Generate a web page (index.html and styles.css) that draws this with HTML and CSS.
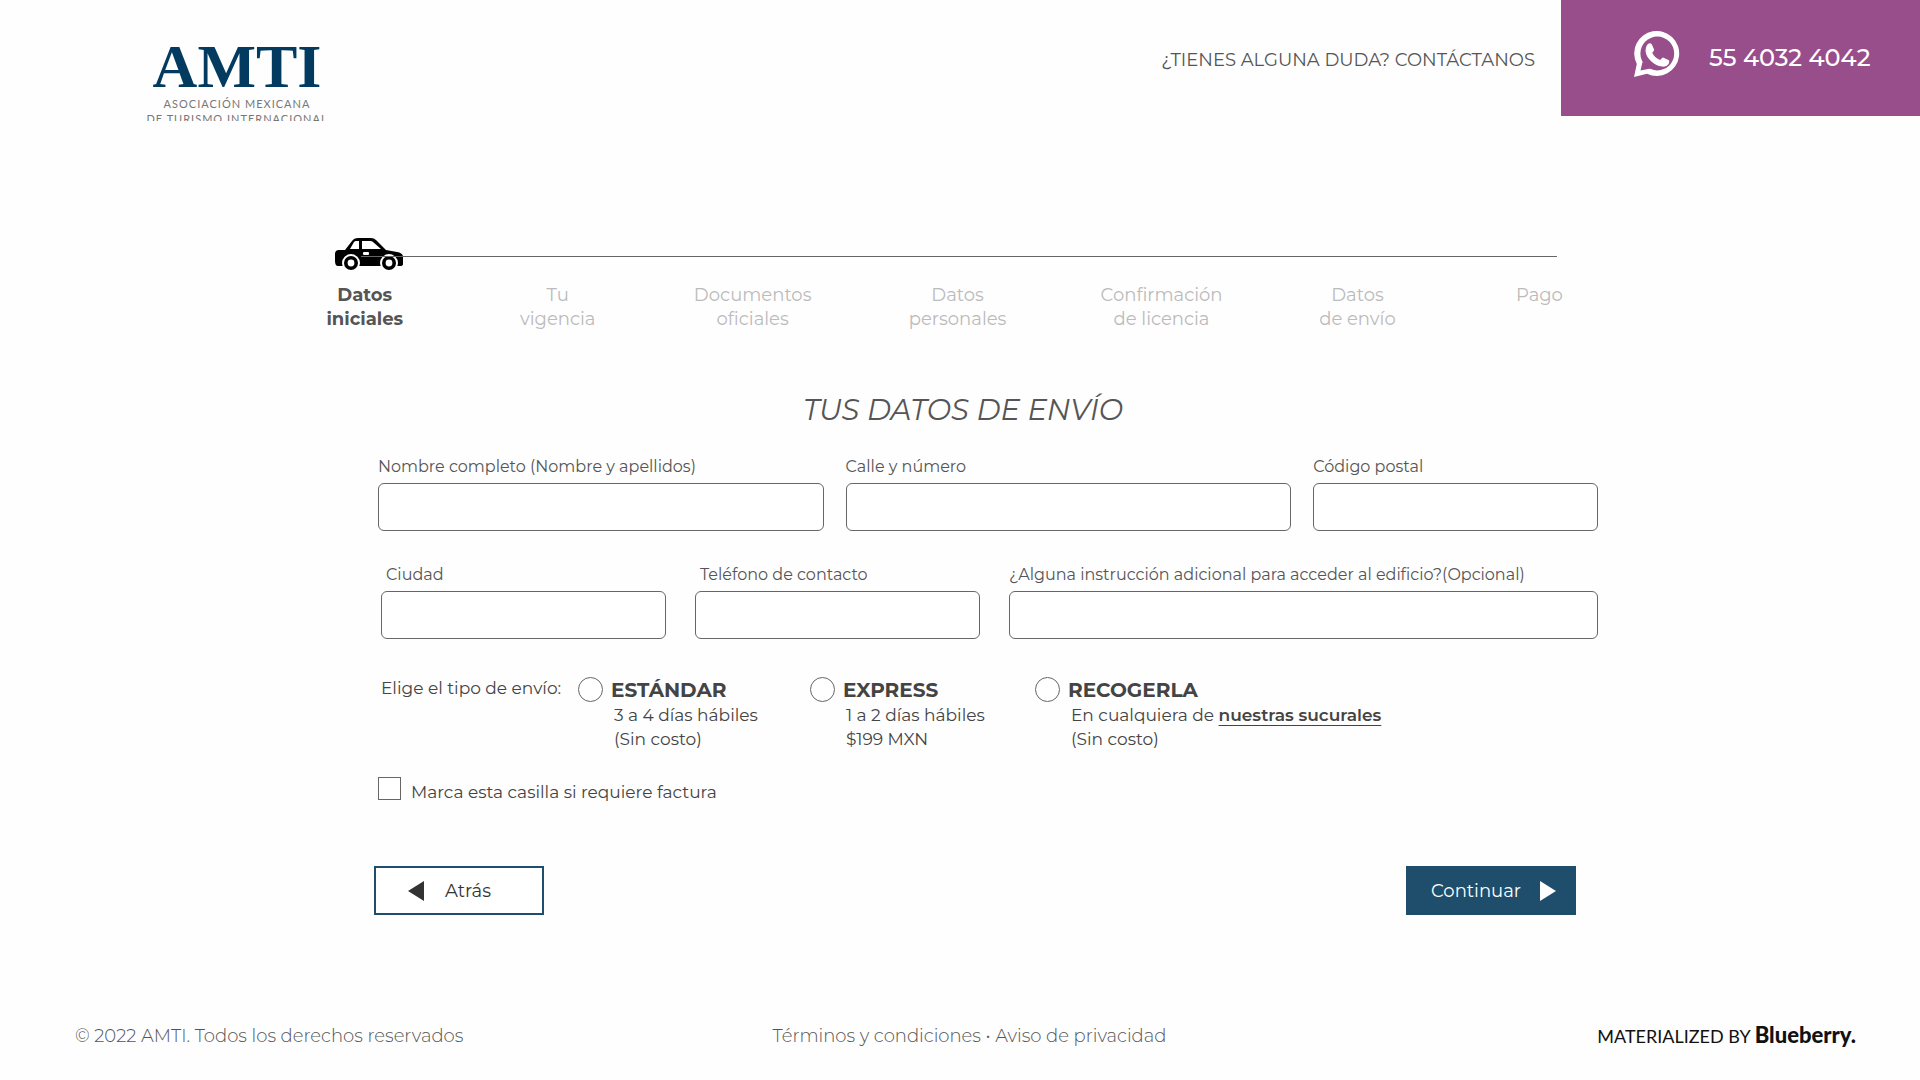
FILE: index.html
```html
<!DOCTYPE html>
<html lang="es">
<head>
<meta charset="utf-8">
<meta name="viewport" content="width=device-width, initial-scale=1">
<title>AMTI - Tus datos de envío</title>
<link rel="stylesheet" href="styles.css">
</head>
<body>
<header class="header">
  <a class="logo" href="#" aria-label="AMTI">
    <span class="logo-name">AMTI</span>
    <span class="logo-tag">ASOCIACIÓN MEXICANA</span>
    <span class="logo-tag">DE TURISMO INTERNACIONAL</span>
  </a>
  <div class="header-contact">
    <a class="question" href="#">¿TIENES ALGUNA DUDA? CONTÁCTANOS</a>
    <a class="phone" href="#">
      <svg class="phone-icon" viewBox="0 0 46 46" aria-hidden="true">
        <path d="M0 46L2.800 33A22.500 22.500 0 1 1 13 42.800Z" fill="#fff"/>
        <circle cx="23.300" cy="22.500" r="16.900" fill="#984e8b"/>
        <path d="M6.500 39.500L8.500 31L16.500 37.500Z" fill="#984e8b"/>
        <path d="M14 13c1.200-1 3-1 3.700.3l2.300 5c.3 1-.2 1.900-1.800 3.500 1.800 3.500 4.300 5.800 8 7.300 1.700-1.800 2.300-2.800 3.300-2.400l5 2.400c1.200.7.8 2.200.2 3.600-1.200 2-4.200 3.300-6.600 2.900-8.500-1.300-15.900-8.700-16.500-15.200-.2-3 .9-6 2.400-7.400z" fill="#fff"/>
      </svg>
      <span>55 4032 4042</span>
    </a>
  </div>
</header>

<main>
  <nav class="progress" aria-label="Progreso">
    <div class="track">
      <svg class="car" viewBox="0 0 68 32" aria-hidden="true">
        <path fill-rule="evenodd" d="M10 12L17 3Q19 0 23 0H36Q39 0 41 2L51 12L62 14Q68 15 68 19V26Q68 28 65 28H3Q0 28 0 23V16Q0 12 4 12ZM15 11H24V3H21Q20 3 19 4ZM27 11H46L38 4Q37 3 35 3H27Z"/>
        <rect x="28" y="14" width="6" height="3" rx="1" fill="#fff"/>
        <g fill="#000" stroke="#fff" stroke-width="2"><circle cx="16" cy="25" r="8"/><circle cx="54" cy="25" r="8"/></g>
        <g fill="#fff"><circle cx="16" cy="25" r="3.400"/><circle cx="54" cy="25" r="3.400"/></g>
        <path d="M26 18.500H68" stroke="#666"/>
      </svg>
    </div>
    <ol class="steps">
      <li class="current" aria-current="step">Datos<br>iniciales</li>
      <li>Tu<br>vigencia</li>
      <li>Documentos<br>oficiales</li>
      <li>Datos<br>personales</li>
      <li>Confirmación<br>de licencia</li>
      <li>Datos<br>de envío</li>
      <li>Pago</li>
    </ol>
  </nav>

  <form class="form">
    <h1 class="title">TUS DATOS DE ENVÍO</h1>
    <div class="row row-address">
      <div class="field"><label for="nombre">Nombre completo (Nombre y apellidos)</label><input id="nombre" type="text"></div>
      <div class="field"><label for="calle">Calle y número</label><input id="calle" type="text"></div>
      <div class="field"><label for="cp">Código postal</label><input id="cp" type="text"></div>
    </div>
    <div class="row row-contact">
      <div class="field field-inset"><label for="ciudad">Ciudad</label><input id="ciudad" type="text"></div>
      <div class="field field-inset"><label for="tel">Teléfono de contacto</label><input id="tel" type="tel"></div>
      <div class="field"><label for="extra">¿Alguna instrucción adicional para acceder al edificio?(Opcional)</label><input id="extra" type="text"></div>
    </div>
    <div class="shipping" role="radiogroup" aria-labelledby="tipo">
      <span class="shipping-label" id="tipo">Elige el tipo de envío:</span>
      <div class="option">
        <input type="radio" name="envio" id="estandar">
        <label for="estandar">ESTÁNDAR</label>
        <p>3 a 4 días hábiles<br>(Sin costo)</p>
      </div>
      <div class="option">
        <input type="radio" name="envio" id="express">
        <label for="express">EXPRESS</label>
        <p>1 a 2 días hábiles<br>$199 MXN</p>
      </div>
      <div class="option">
        <input type="radio" name="envio" id="recogerla">
        <label for="recogerla">RECOGERLA</label>
        <p>En cualquiera de <a href="#">nuestras sucurales</a><br>(Sin costo)</p>
      </div>
    </div>
    <div class="invoice">
      <input type="checkbox" id="factura">
      <label for="factura">Marca esta casilla si requiere factura</label>
    </div>
    <div class="actions">
      <button class="button button-back" type="button">
        <svg class="arrow" viewBox="0 0 16 20" aria-hidden="true"><path d="M0 10L16 0V20Z"/></svg>
        <span>Atrás</span>
      </button>
      <button class="button button-next" type="submit">
        <span>Continuar</span>
        <svg class="arrow" viewBox="0 0 16 20" aria-hidden="true"><path d="M16 10L0 0V20Z"/></svg>
      </button>
    </div>
  </form>
</main>

<footer class="footer">
  <span>© 2022 AMTI. Todos los derechos reservados</span>
  <span class="legal"><a href="#">Términos y condiciones</a> • <a href="#">Aviso de privacidad</a></span>
  <span class="credit">MATERIALIZED BY <strong>Blueberry.</strong></span>
</footer>
</body>
</html>
```
FILE: styles.css
```css
* { box-sizing: border-box; }

body {
  margin: 0;
  min-height: 100vh;
  display: flex;
  flex-direction: column;
  background: #fefefe;
  color: #555;
  font-family: Montserrat, Inter, sans-serif;
  font-size: 18px;
  line-height: 24px;
}

a { color: inherit; text-decoration: none; }

/* Header */
.header {
  display: flex;
  justify-content: space-between;
  align-items: flex-start;
}

.logo {
  display: flex;
  flex-direction: column;
  align-items: center;
  width: 180px;
  height: 121px;
  margin-left: 147px;
  padding-top: 36px;
  overflow: hidden;
  white-space: nowrap;
}

.logo-name {
  color: #023b5f;
  font: bold 62px/60px "Liberation Serif", serif;
}

.logo-tag {
  color: #777;
  font: 11px/15px Lato, sans-serif;
  letter-spacing: 1px;
}

.header-contact { display: flex; }

.question { padding: 48px 26px 0 0; }

.phone {
  display: flex;
  align-items: center;
  gap: 29px;
  min-width: 359px;
  height: 116px;
  padding: 0 46px 8px 73px;
  background: #984e8b;
  color: #fff;
  font-size: 24px;
  font-weight: 500;
}

.phone span { padding-top: 8px; }

.phone-icon { width: 46px; height: 46px; }

/* Progress */
.progress { margin: 117px 15.5% 0 14%; }

.track {
  display: flex;
  height: 32px;
  margin: 0 65px 0 66px;
  background: linear-gradient(#666, #666) 100% 18px / calc(100% - 68px) 1px no-repeat;
}

.car { width: 68px; height: 32px; }

.steps {
  display: grid;
  grid-template-columns: 192fr 194fr 196fr 214fr 194fr 198fr 166fr;
  margin: 13px 0 0;
  padding: 0;
  list-style: none;
  color: #bbb;
  text-align: center;
}

.current { color: #555; font-weight: 700; }

/* Form */
.form {
  margin: 59px 322px 0 378px;
  color: #444;
}

.title {
  margin: 0 50px 25px 0;
  color: #555;
  font-size: 29px;
  font-style: italic;
  font-weight: 400;
  line-height: 40px;
  text-align: center;
}

.row { display: grid; }

.row-address {
  grid-template-columns: 446fr 446fr 285fr;
  gap: 22px;
}

.row-contact {
  grid-template-columns: 285fr 285fr 589fr;
  gap: 29px;
  margin: 32px 0 0 3px;
}

.field {
  display: flex;
  flex-direction: column;
  gap: 4px;
  min-width: 0;
  color: #555;
  font-size: 16px;
}

.field-inset label { padding-left: 5px; }

.field input {
  width: 100%;
  height: 48px;
  padding: 0 12px;
  border: 1px solid #666;
  border-radius: 6px;
  background: #fff;
  font: inherit;
}

.shipping {
  display: grid;
  grid-template-columns: 197px 232px 225px 1fr;
  margin: 38px 0 0 3px;
  font-size: 17px;
  line-height: 24px;
}

.shipping-label { line-height: 22px; }

.option {
  display: grid;
  grid-template-columns: 25px 1fr;
  column-gap: 8px;
  align-items: center;
}

.option label { font-size: 20px; font-weight: 700; }

.option p { grid-column: 2; margin: 1px 0 0 3px; }

.option a {
  font-weight: 600;
  text-decoration: underline;
  text-decoration-thickness: 1px;
  text-underline-offset: 4px;
}

input[type="radio"],
input[type="checkbox"] {
  appearance: none;
  margin: 0;
  border: 1px solid #666;
  background: #fff;
}

input[type="radio"] { width: 25px; height: 25px; border-radius: 50%; }
input[type="checkbox"] { width: 23px; height: 23px; }

.invoice {
  display: flex;
  gap: 10px;
  margin-top: 26px;
  font-size: 17px;
}

.invoice label { padding-top: 3px; }

.actions {
  display: flex;
  justify-content: space-between;
  margin: 62px 22px 0 -4px;
}

.button {
  display: flex;
  align-items: center;
  width: 170px;
  height: 49px;
  border: 2px solid #1e4e6c;
  font: inherit;
}

.button-back { gap: 21px; padding: 0 32px; background: #fff; color: #333; }
.button-next { justify-content: space-between; padding: 0 18px 0 23px; background: #1e4e6c; color: #fff; }

.arrow { width: 16px; height: 20px; fill: currentColor; }

/* Footer */
.footer {
  display: grid;
  grid-template-columns: 1fr auto 1fr;
  align-items: center;
  margin-top: auto;
  padding: 0 64px 32px 75px;
  font-weight: 300;
}

.legal { padding-left: 8px; }

.credit {
  color: #111;
  font: 18px/24px Lato, sans-serif;
  text-align: right;
}

.credit strong { font-size: 22px; font-weight: 900; }
```
